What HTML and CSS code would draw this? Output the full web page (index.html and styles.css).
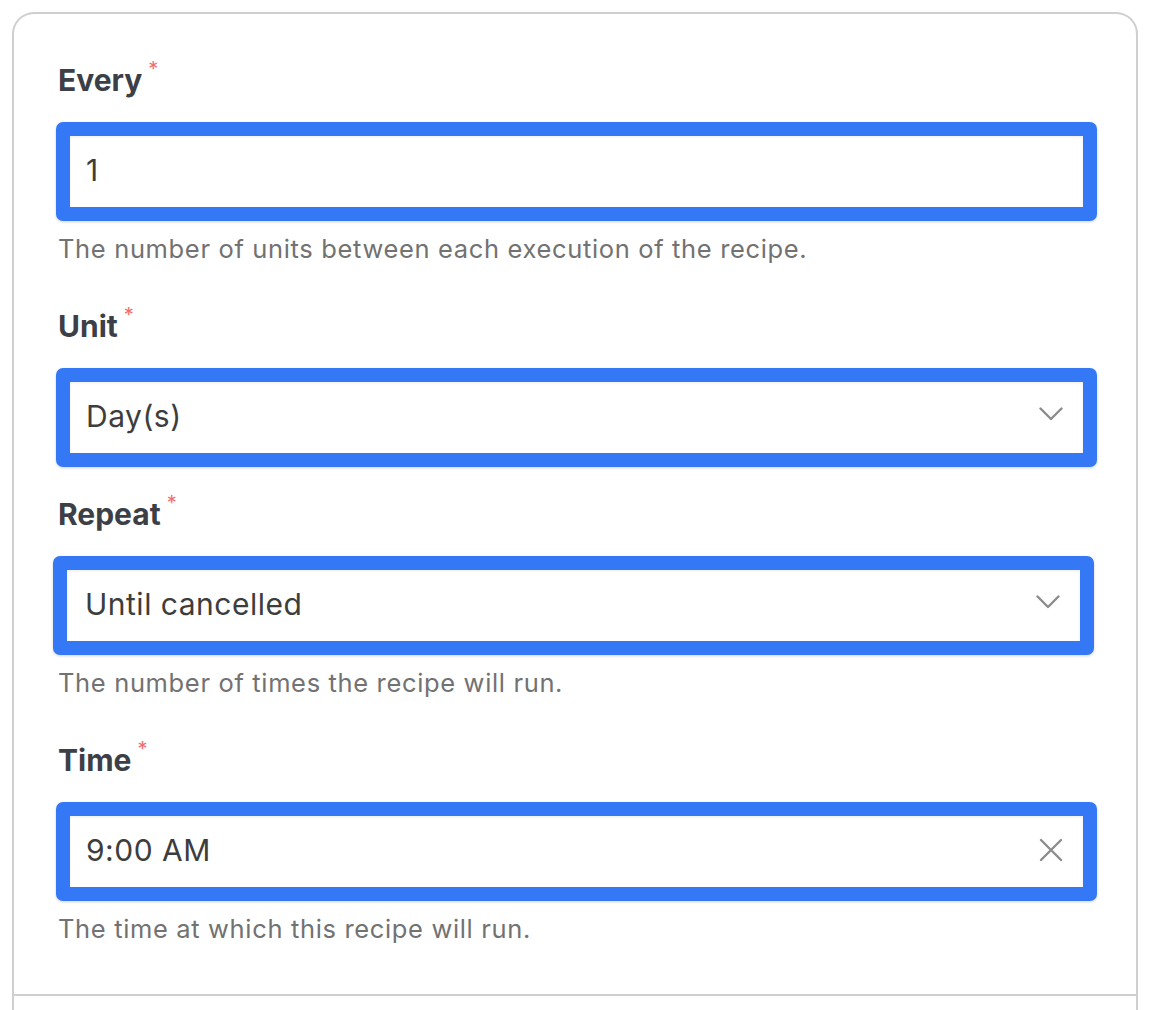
FILE: index.html
```html
<!DOCTYPE html>
<html lang="en">
<head>
<meta charset="utf-8">
<title>Schedule</title>
<link rel="stylesheet" href="styles.css">
</head>
<body>
<div class="card">
  <div class="form">
    <div class="field">
      <div class="label">Every<span class="req">*</span></div>
      <div class="control"><span class="value">1</span></div>
      <div class="help">The number of units between each execution of the recipe.</div>
    </div>
    <div class="field field-compact">
      <div class="label">Unit<span class="req">*</span></div>
      <div class="control"><span class="value">Day(s)</span>
        <svg class="icon icon-chevron" width="24" height="14" viewBox="0 0 24 14"><path d="M1.5 1.5 L12 12 L22.5 1.5" fill="none" stroke="#8c8c8c" stroke-width="2.4" stroke-linecap="round" stroke-linejoin="round"/></svg>
      </div>
    </div>
    <div class="field">
      <div class="label">Repeat<span class="req">*</span></div>
      <div class="control control-shift"><span class="value value-shift">Until cancelled</span>
        <svg class="icon icon-chevron" width="24" height="14" viewBox="0 0 24 14"><path d="M1.5 1.5 L12 12 L22.5 1.5" fill="none" stroke="#8c8c8c" stroke-width="2.4" stroke-linecap="round" stroke-linejoin="round"/></svg>
      </div>
      <div class="help">The number of times the recipe will run.</div>
    </div>
    <div class="field">
      <div class="label">Time<span class="req">*</span></div>
      <div class="control"><span class="value">9:00 AM</span>
        <svg class="icon" width="24" height="24" viewBox="0 0 24 24"><path d="M2 2 L22 22 M22 2 L2 22" fill="none" stroke="#8c8c8c" stroke-width="2.4" stroke-linecap="round"/></svg>
      </div>
      <div class="help">The time at which this recipe will run.</div>
    </div>
  </div>
  <div class="footer"></div>
</div>
</body>
</html>
```

FILE: styles.css
```css
* { box-sizing: border-box; }
html, body { margin: 0; padding: 0; background: #ffffff; }
body { font-family: Inter, "Noto Sans", "Liberation Sans", sans-serif; }

.card {
  margin: 12px 12px 0 12px;
  border: 2px solid #cfcfcf;
  border-bottom: none;
  border-radius: 22px 22px 0 0;
  background: #fff;
  height: 1100px;
}

.form {
  padding: 48px 39px 6px 42px;
}

.field { padding-bottom: 44px; }
.field-compact { padding-bottom: 29px; }

.label {
  font-size: 30px;
  line-height: 36px;
  font-weight: 700;
  color: #3c4046;
  padding-left: 2px;
  margin-bottom: 24px;
}

.req {
  font-size: 20px;
  font-weight: 400;
  color: #ef6f6f;
  vertical-align: top;
  line-height: 14px;
  margin-left: 6px;
}

.control {
  height: 99px;
  border: 14px solid #3478f6;
  border-radius: 7px;
  background: #fff;
  display: flex;
  align-items: center;
  justify-content: space-between;
  padding: 0 20px 4px 14px;
  box-shadow: 0 1px 3px rgba(0,0,0,0.18), inset 0 1px 3px rgba(0,0,0,0.08);
}

.control-shift { margin-left: -3px; margin-right: 3px; }

.value {
  font-size: 30px;
  letter-spacing: 0.5px;
  color: #3d3d3d;
  padding-left: 2px;
}

.value-shift { padding-left: 4px; }

.icon { display: block; flex: none; }
.icon-chevron { margin-top: -4px; }

.help {
  margin-top: 13px;
  font-size: 25.5px;
  line-height: 30px;
  letter-spacing: 0.65px;
  color: #727272;
  padding-left: 2px;
}

.footer {
  border-top: 2px solid #cfcfcf;
  height: 60px;
}
```
